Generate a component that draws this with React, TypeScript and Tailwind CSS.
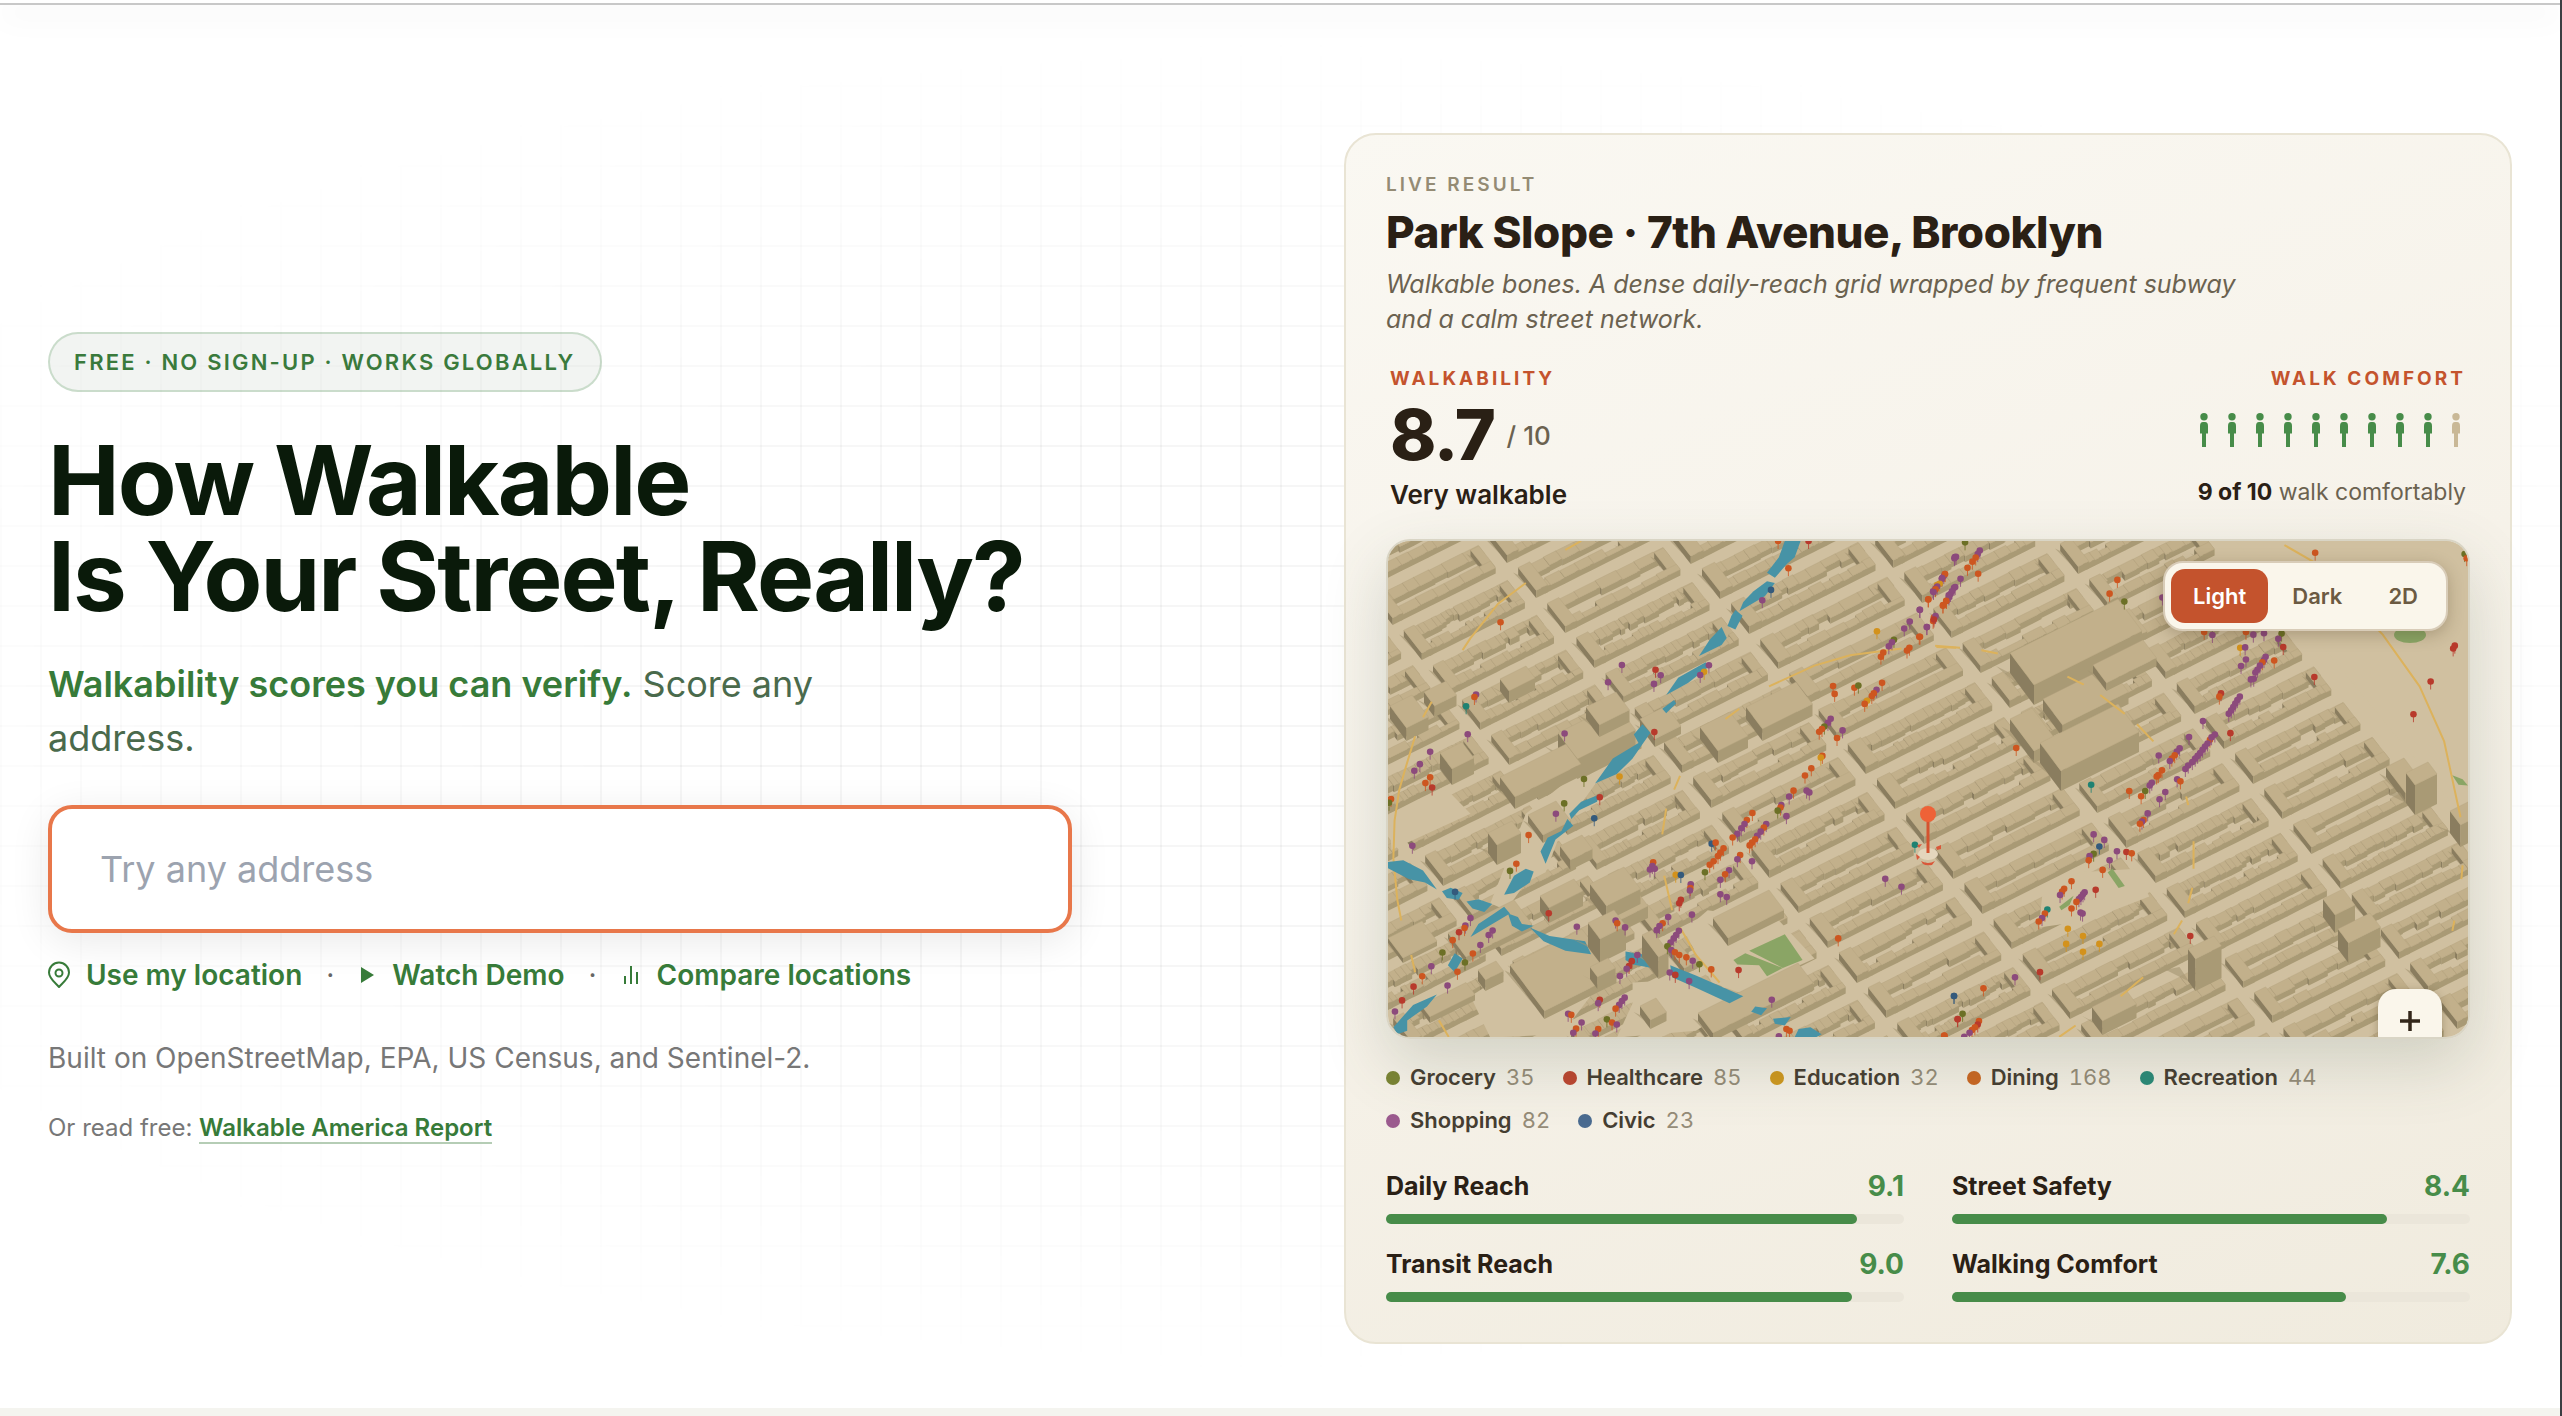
import { Fragment } from "react";

type Point = [number, number];

const categories = [
  { name: "Grocery", count: 35, dot: "bg-[#7a8434]" },
  { name: "Healthcare", count: 85, dot: "bg-[#bd4630]" },
  { name: "Education", count: 32, dot: "bg-[#cf981f]" },
  { name: "Dining", count: 168, dot: "bg-[#cb6722]" },
  { name: "Recreation", count: 44, dot: "bg-[#2b8a78]" },
  { name: "Shopping", count: 82, dot: "bg-[#9b5a8e]" },
  { name: "Civic", count: 23, dot: "bg-[#4a6b90]" },
];

const metrics = [
  { name: "Daily Reach", score: "9.1" },
  { name: "Street Safety", score: "8.4" },
  { name: "Transit Reach", score: "9.0" },
  { name: "Walking Comfort", score: "7.6" },
];

/* ---------- map geometry ---------- */

const GROUND = "#d0c0a0";
const ROOF = "#c2b08b";
const FRONT = "#a99a75";
const SIDE = "#8a7d5f";
const WATER = "#4793a6";

// the city is stored as two survey tiles, each with its own scale
const west = ([x, y]: Point): Point => [x * 0.3954 - 48, y * 0.3444 - 20];
const east = ([x, y]: Point): Point => [x * 0.4095 + 532, y * 0.3444 - 20];

function random(seed: number) {
  let s = seed;
  return () => {
    s = (s * 16807) % 2147483647;
    return s / 2147483647;
  };
}

const poly = (pts: Point[]) =>
  "M" + pts.map(([x, y]) => x.toFixed(1) + " " + y.toFixed(1)).join("L") + "Z";

// an extruded footprint: corners go back-left, back-right, front-right, front-left
function extrude(a: Point, b: Point, c: Point, d: Point, h: number) {
  const up = ([x, y]: Point): Point => [x, y - h];
  return {
    side: poly([a, d, up(d), up(a)]),
    front: poly([d, c, up(c), up(d)]),
    roof: poly([up(a), up(b), up(c), up(d)]),
    shadow: poly([a, d, [d[0] - h * 0.5, d[1] - h * 0.75], [a[0] - h * 0.7, a[1] - h * 0.35]]),
  };
}

type Solid = ReturnType<typeof extrude>;

function join(parts: Solid[]): Solid {
  return {
    side: parts.map((p) => p.side).join(""),
    front: parts.map((p) => p.front).join(""),
    roof: parts.map((p) => p.roof).join(""),
    shadow: parts.map((p) => p.shadow).join(""),
  };
}

// avenue positions at y = 100 and the y of one block corner in the column to the right of it
const avenues = [
  { x: -490, y: 250 },
  { x: -325, y: 262 },
  { x: -158, y: 240 },
  { x: 9, y: 259 },
  { x: 175, y: 267 },
  { x: 358, y: 338 },
  { x: 557, y: 272 },
  { x: 737, y: 243 },
  { x: 909, y: 0 },
];

function cityBlocks() {
  const rows: Solid[] = [];
  const pitch = 35;
  for (let col = 0; col < avenues.length - 1; col++) {
    const from = avenues[col];
    const span = (avenues[col + 1].x - from.x - 20) / 1.417;
    for (let k = -16; k < 22; k++) {
      const by = from.y + k * pitch;
      const bx = from.x + (by - 100) / 1.2 + 9;
      if (by < -10 || by - span / 2 > 530 || bx > 1090 || bx + span < -10) continue;
      const rnd = random((col + 3) * 7919 + (k + 40) * 104729);
      // t runs along the street, s from the back of the block to its front
      const at = (t: number, s: number): Point => [
        bx + t * span - (1 - s) * 18,
        by - t * span * 0.5 - (1 - s) * 23,
      ];
      const slots = 6 + Math.floor(rnd() * 10);
      const rough = rnd() < 0.5 ? 0.17 : 0.08;
      const build = (s0: number, s1: number, inner: "front" | "back") => {
        const parts: Solid[] = [];
        let t = 1;
        while (t > 0.1) {
          const w = (0.5 + rnd() * 0.9) / slots;
          const t0 = Math.max(0.08, t - w);
          const cut = rnd() < 0.5 ? 0 : rnd() * rough;
          const a0 = inner === "back" ? s0 + cut : s0;
          const b0 = inner === "front" ? s1 - cut : s1;
          parts.push(extrude(at(t0, a0), at(t, a0), at(t, b0), at(t0, b0), 5.5 + rnd()));
          t = t0;
        }
        return join(parts);
      };
      rows.push(build(0.03, 0.4, "front"));
      rows.push(extrude(at(0.92, 0.06), at(1, 0.06), at(1, 0.96), at(0.92, 0.96), 6));
      rows.push(build(0.68, 1, "back"));
      rows.push(extrude(at(0, 0), at(0.1, 0), at(0.1, 1), at(0, 1), 6.5 + rnd() * 1.5));
    }
  }
  return rows;
}

// open lots cleared out of the street grid
const lots: Point[][] = [
  [[125, 850], [270, 780], [330, 850], [130, 955]].map((p) => west(p as Point)),
  [[870, 1190], [930, 1130], [1110, 1160], [1200, 1270], [1010, 1370], [940, 1340]].map((p) => west(p as Point)),
  [[740, 1340], [900, 1330], [1010, 1400], [900, 1480], [700, 1500], [740, 1400]].map((p) => west(p as Point)),
  [[300, 1070], [390, 1020], [530, 1010], [560, 1090], [410, 1160], [290, 1180]].map((p) => east(p as Point)),
  [[330, 1380], [440, 1300], [560, 1240], [640, 1370], [560, 1490], [380, 1500]].map((p) => west(p as Point)),
  [[470, 850], [590, 740], [660, 740], [560, 900], [520, 1020], [470, 1050], [420, 1130], [380, 1110]].map((p) => west(p as Point)),
];

// x, y of the back-left corner, street length, depth, height
const landmarks: number[][] = [
  [622, 132, 108, 32, 20],
  [622, 190, 22, 32, 12],
  [655, 170, 66, 26, 12],
  [705, 132, 50, 18, 8],
  [652, 222, 78, 28, 20],
  [170, 212, 58, 26, 20],
  [198, 178, 30, 18, 12],
  [112, 248, 66, 20, 12],
  [2, 178, 22, 22, 13],
  [36, 162, 22, 14, 11],
  [112, 150, 26, 12, 12],
  [358, 178, 50, 22, 12],
  [312, 198, 30, 24, 12],
  [252, 186, 26, 20, 8],
  [52, 228, 22, 16, 16],
  [100, 312, 24, 12, 20],
  [140, 282, 28, 20, 8],
  [172, 315, 22, 14, 10],
  [220, 375, 28, 16, 12],
  [152, 370, 34, 12, 15],
  [202, 358, 34, 22, 15],
  [325, 385, 56, 20, 8],
  [60, 398, 66, 24, 6],
  [122, 432, 72, 46, 8],
  [90, 440, 18, 10, 11],
  [0, 402, 34, 20, 5],
  [33, 470, 45, 12, 6],
  [252, 474, 16, 14, 9],
  [310, 480, 100, 20, 8],
  [998, 236, 18, 26, 10],
  [1018, 262, 22, 12, 30],
  [1062, 292, 18, 14, 22],
  [935, 376, 20, 16, 18],
  [950, 408, 32, 14, 20],
  [800, 440, 26, 10, 32],
  [704, 480, 34, 14, 14],
];

// these stand in front of the canal
const towers: number[][] = [
  [200, 406, 26, 16, 24],
  [254, 416, 10, 22, 22],
  [202, 438, 18, 10, 12],
];

const toSolids = (list: number[][]) =>
  list.map(([x, y, len, depth, h]) =>
    extrude(
      [x, y],
      [x + len, y - len / 2],
      [x + len + depth * 0.75, y - len / 2 + depth],
      [x + depth * 0.75, y + depth],
      h
    )
  );

const blocks = cityBlocks();

const water: Point[][] = [
  [[1125, 58], [1165, 58], [1150, 105], [1130, 125], [1100, 165], [1080, 150], [1110, 105]],
  [[1080, 175], [1100, 180], [1075, 218], [1010, 262], [1020, 235], [1045, 205]],
  [[1000, 258], [1018, 275], [1000, 315], [980, 305], [990, 275]],
  [[965, 308], [978, 340], [965, 360], [908, 392], [935, 345]],
  [[925, 410], [930, 425], [880, 470], [825, 505], [855, 455]],
  [[815, 545], [845, 520], [850, 530], [825, 558]],
  [[765, 590], [785, 615], [740, 690], [700, 735], [645, 762], [690, 690], [755, 645], [743, 620]],
  [[655, 795], [650, 815], [605, 840], [585, 865], [580, 850], [610, 815]],
  [[575, 865], [590, 885], [545, 925], [520, 995], [507, 960], [525, 920], [560, 900]],
  [[490, 1018], [480, 1050], [440, 1080], [415, 1085], [440, 1030], [470, 1010]],
  [[121, 990], [160, 985], [210, 1015], [245, 1070], [215, 1050], [175, 1040], [121, 1008]],
  [[258, 1075], [280, 1065], [310, 1080], [300, 1100], [270, 1095]],
  [[320, 1105], [350, 1098], [385, 1112], [365, 1135], [335, 1125]],
  [[415, 1120], [430, 1140], [400, 1160], [330, 1208], [350, 1170], [390, 1140]],
  [[425, 1140], [450, 1150], [460, 1170], [490, 1175], [460, 1192], [435, 1175]],
  [[480, 1180], [530, 1205], [620, 1220], [635, 1258], [570, 1248], [515, 1220]],
  [[722, 1250], [775, 1260], [800, 1300], [740, 1288], [722, 1275]],
  [[835, 1290], [900, 1320], [1020, 1380], [985, 1400], [900, 1355], [840, 1325]],
  [[290, 1255], [310, 1270], [290, 1310], [273, 1290]],
  [[245, 1375], [220, 1410], [170, 1450], [170, 1480], [145, 1490], [135, 1470], [185, 1405]],
  [[1050, 1410], [1080, 1415], [1065, 1435], [1040, 1425]],
  [[1095, 1445], [1140, 1440], [1125, 1465], [1100, 1460]],
  [[1160, 1475], [1190, 1470], [1218, 1490], [1205, 1498], [1150, 1498]],
];

const westRoads = [
  "M610 58L570 84",
  "M470 180L400 240L330 340L310 375",
  "M232 525L210 570",
  "M190 625L165 720L150 780L138 870L135 980L145 1100L155 1160",
  "M180 1260L190 1310M250 1450L275 1498",
  "M1085 480L1200 420L1290 390L1420 370",
  "M1505 362L1568 368",
  "M860 740L845 780M825 835L815 910M820 1030L840 1130M860 1180L900 1260L960 1340",
  "M975 575L1010 545",
];
const eastRoads = [
  "M40 366L88 368M150 375L190 385",
  "M360 452L400 475M440 505L500 560M530 590L570 640",
  "M650 800L655 825M668 930L668 1010M665 1065L655 1110M640 1160L620 1200",
  "M545 1325L490 1380M380 1465L340 1498",
  "M890 70L960 118L1130 330L1220 480L1280 640L1320 860",
  "M1305 1160L1300 1190M1325 1000L1322 1040",
];

const pinColors: Record<string, string> = {
  p: "#8c4a7c",
  o: "#cd5620",
  r: "#b83a2c",
  y: "#d3921c",
  g: "#6c7026",
  b: "#345a7c",
  t: "#1f8272",
};

const westPins =
  "o1108 58 r1185 58 o1134 137 b1090 200 p1068 230 p1555 105 o406 294 p713 418 r798 432 p811 448 p794 473 p678 468 p933 419 y921 438 p911 447 " +
  "p344 504 o340 511 t319 538 p323 619 p568 617 r795 613 p228 670 p202 706 p188 725 o228 744 o216 761 r233 774 o129 807 g124 818 g617 749 y707 742 g567 820 r657 802 p546 850 b643 863 " +
  "o477 912 p183 943 o446 995 g430 1016 b291 1077 r528 1139 p599 1178 p330 1153 p317 1175 o315 1182 r301 1194 o285 1217 p386 1189 p376 1202 p355 1231 o336 1256 g259 1253 p231 1293 g316 1282 o297 1309 o208 1322 p272 1349 r186 1352 r157 1392 p139 1424 " +
  "y1358 320 g1401 345 p1396 352 p1388 364 o1374 382 o1368 394 o1440 368 o1434 376 o1465 336 p1484 308 p1441 292 p1427 312 p1466 258 o1502 280 o1500 290 o1488 228 p1500 204 y1510 186 p1522 168 o1530 154 p1506 196 p1527 160 o1525 244 o1534 232 p1544 212 p1553 194 p1540 222 " +
  "o1247 479 o1251 502 o1301 484 g1311 478 o1371 470 p1357 490 o1350 500 o1345 508 y1333 522 o1327 531 p1241 574 p1234 586 g1225 597 o1219 604 o1212 612 p1271 608 o1257 630 o1220 682 y1216 687 o1192 718 o1176 739 o1147 783 p1136 800 p1180 783 p1187 788 p1116 825 o1114 832 g1107 841 p1129 857 " +
  "o1043 848 o1029 868 p1023 880 p1015 892 p1005 908 o993 919 p1078 880 o1072 890 p1064 902 p1055 914 o1050 924 o1042 934 o1036 942 b940 937 o950 934 o970 950 o962 963 o956 973 o945 988 o935 998 o1012 970 p1005 982 p1042 988 g923 1020 p984 1014 o974 1026 p962 1042 " +
  "o792 991 p790 1002 p784 1012 p796 1010 y849 1027 b862 1028 p887 1055 o886 1066 p885 1073 p962 1084 p978 1092 r862 1100 r858 1110 p890 1143 p830 1150 o816 1168 p808 1176 p801 1188 p697 1160 o701 1168 p721 1180 p857 1190 p850 1202 p844 1212 p836 1224 g828 1235 p838 1246 o847 1252 o858 1260 o876 1267 p892 1277 g909 1287 o939 1302 r1008 1304 " +
  "p752 1260 r738 1278 r731 1292 p725 1300 p708 1321 p834 1311 r848 1318 p883 1336 p720 1384 p713 1394 p706 1405 o697 1416 r657 1390 p653 1400 p577 1431 o585 1434 p611 1456 o597 1474 p590 1486 g675 1447 o688 1456 p700 1462 o653 1475 p646 1488 p1092 1390 o1129 1475 o1137 1480 p1110 1496 p1379 1039 p1420 1062 o1260 1212 b1553 1379 r1562 1446 o1528 1494 t1454 940";

const eastPins =
  "g110 62 p88 104 p84 108 p146 86 p141 96 o136 106 o128 118 o116 136 o142 153 p99 168 o61 154 p54 166 y48 182 p42 190 o38 198 p33 206 o20 227 p0 258 p86 192 p78 204 p70 216 o64 232 o56 246 p38 276 r34 286 p17 308 o0 336 o482 171 o463 211 g499 234 o965 92 p592 222 " +
  "o694 322 p714 331 o796 322 p814 330 p840 326 g883 327 p875 342 r887 366 y782 368 p794 367 p796 402 p784 421 o865 405 p844 394 p840 404 o836 410 p830 420 p824 432 p819 440 p815 458 p808 460 r963 453 r1306 362 r1302 370 r1247 466 r1205 561 g1330 96 o1335 108 " +
  "r735 500 o731 510 p781 510 p775 520 p770 530 p765 540 p760 550 p754 560 p691 581 r758 616 p657 627 p720 620 o708 635 p712 628 p702 646 p696 655 p690 664 p684 674 p678 682 p672 690 p665 700 p655 710 p648 720 p634 660 p627 670 o622 680 o615 690 p610 697 p583 681 " +
  "o591 724 o582 738 o578 742 p566 760 p561 768 g550 784 o540 799 o511 784 p628 750 o636 756 p599 787 p585 808 t418 766 o235 659 p556 849 o546 868 p542 873 o537 879 p424 910 p450 926 b438 945 g424 966 p414 973 o412 985 p481 959 r504 961 o517 965 p463 985 o446 1013 r429 1071 " +
  "o370 1046 o352 1068 o347 1076 p342 1086 p402 1078 p398 1084 p393 1092 p388 1098 o382 1106 o370 1125 p392 1137 p397 1140 t311 1128 o305 1140 p298 1153 o290 1163 y361 1184 y398 1205 y357 1228 y438 1228 y398 1251 r660 1205 r293 1310 p232 1325 o155 1357 b83 1379 g104 1431 r92 1447 o144 1452 r141 1462 o134 1470 o127 1478 p121 1486 o60 1495 p108 1498";

function readPins(source: string, project: (p: Point) => Point) {
  const tokens = source.split(" ");
  const pins: { color: string; at: Point }[] = [];
  for (let i = 0; i < tokens.length; i += 2) {
    const x = Number(tokens[i].slice(1));
    pins.push({ color: pinColors[tokens[i][0]], at: project([x, Number(tokens[i + 1])]) });
  }
  return pins;
}

const pins = [...readPins(westPins, west), ...readPins(eastPins, east)];

function SolidPaths({ solids }: { solids: Solid[] }) {
  return (
    <>
      {solids.map((s, i) => (
        <Fragment key={i}>
          <path d={s.shadow} fill="#a39472" fillOpacity="0.6" />
          <path d={s.side} fill={SIDE} />
          <path d={s.front} fill={FRONT} />
          <path d={s.roof} fill={ROOF} stroke="#b3a27d" strokeWidth="0.4" />
        </Fragment>
      ))}
    </>
  );
}

function CityMap() {
  return (
    <svg
      viewBox="0 0 1080 496"
      preserveAspectRatio="xMidYMid slice"
      className="block h-[496px] w-full"
      role="img"
      aria-label="3D map of Park Slope"
    >
      <rect width="1080" height="496" fill={GROUND} />
      <SolidPaths solids={blocks} />
      {lots.map((l, i) => (
        <path key={i} d={poly(l)} fill={GROUND} />
      ))}
      <path d="M848 0L1080 0L1080 282L1050 246Z" fill={GROUND} />
      <SolidPaths solids={toSolids(landmarks)} />
      <g fill="none" stroke="#dcb25c" strokeWidth="2">
        <g transform="translate(-48 -20) scale(.3954 .3444)">
          {westRoads.map((d) => (
            <path key={d} d={d} vectorEffect="non-scaling-stroke" />
          ))}
        </g>
        <g transform="translate(532 -20) scale(.4095 .3444)">
          {eastRoads.map((d) => (
            <path key={d} d={d} vectorEffect="non-scaling-stroke" />
          ))}
        </g>
      </g>
      {water.map((w, i) => (
        <path key={i} d={poly(w.map(west))} fill={WATER} />
      ))}
      <g fill="#8aa565">
        <path d={poly(([[1035, 1248], [1125, 1200], [1170, 1275], [1120, 1298]] as Point[]).map(west))} />
        <path d={poly(([[995, 1275], [1025, 1255], [1120, 1298], [1080, 1322], [1060, 1290], [1005, 1288]] as Point[]).map(west))} />
        <path d={poly(([[458, 1020], [470, 1010], [500, 1060], [485, 1066]] as Point[]).map(east))} />
        <path d={poly(([[340, 1120], [375, 1088], [365, 1115], [345, 1130]] as Point[]).map(east))} />
        <path d={poly(([[1300, 738], [1325, 750], [1338, 768], [1315, 766]] as Point[]).map(east))} />
        <ellipse cx="1022" cy="94" rx="16" ry="8" />
      </g>
      <SolidPaths solids={toSolids(towers)} />
      {pins.map(({ color, at: [x, y] }, i) => (
        <g key={i}>
          <path d={"M" + x + " " + y + "v8"} stroke={color} strokeOpacity="0.8" strokeWidth="1" />
          <circle cx={x} cy={y} r="3.3" fill={color} />
        </g>
      ))}
      <g>
        <ellipse cx="540" cy="313" rx="10" ry="6" fill="#e4d6bd" />
        <path d="M533 320q7 4 14 0l-3 4q-6 1-9-1zM528 313l4 3-3 3zM548 306l5-2v4l-4 1zM529 304l5-1-3 4z" fill="#d9583a" />
        <path d="M540 275v37" stroke="#d4532f" strokeWidth="3" />
        <circle cx="540" cy="273" r="8" fill="#ee6237" />
      </g>
    </svg>
  );
}

/* ---------- icons ---------- */

function PinIcon() {
  return (
    <svg viewBox="0 0 22 28" className="h-7 w-[22px]" fill="none" stroke="currentColor" strokeWidth="2" aria-hidden="true">
      <path d="M11 26C7.500 22 1 17.500 1 11.500a10 10 0 0 1 20 0C21 17.500 14.500 22 11 26z" strokeLinejoin="round" />
      <circle cx="11" cy="12" r="3.500" />
    </svg>
  );
}

function PlayIcon() {
  return (
    <svg viewBox="0 0 18 18" className="size-[18px]" fill="currentColor" aria-hidden="true">
      <path d="M3 1l13 8-13 8z" />
    </svg>
  );
}

function BarsIcon() {
  return (
    <svg viewBox="0 0 20 20" className="size-5" stroke="currentColor" strokeWidth="2" aria-hidden="true">
      <path d="M4 11v8M10 1v18M16 7v12" />
    </svg>
  );
}

function Person({ comfortable }: { comfortable: boolean }) {
  return (
    <svg viewBox="0 0 20 34" className="h-[34px] w-5" fill={comfortable ? "#478c49" : "#c9b896"} aria-hidden="true">
      <circle cx="10" cy="3.700" r="3.700" />
      <path d="M6 20v-7q0-4 3-4h2q3 0 3 4v7.500h-2v13.500H8V20.500H6z" />
    </svg>
  );
}

/* ---------- page ---------- */

function HeroCopy() {
  return (
    <div className="relative text-[#777777]">
      <p className="inline-block rounded-full border-2 border-[#2e7d32]/20 bg-[#1a4a1a]/6 px-6 py-3 text-[22px] leading-8 font-semibold tracking-[0.1em] text-[#3a7a3c]">
        FREE · NO SIGN-UP · WORKS GLOBALLY
      </p>
      <h1 className="mt-10 text-[96px] leading-[96px] font-bold tracking-[-0.02em] text-[#0a1a0a]">
        How Walkable
        <br />
        Is Your Street, Really?
      </h1>
      <p className="mt-[33px] max-w-[840px] text-[36px] leading-[54px] text-[#4a6a4c]">
        <strong className="font-semibold text-[#377b39]">Walkability scores you can verify.</strong> Score any address.
      </p>
      <input
        type="text"
        aria-label="Address"
        placeholder="Try any address"
        className="mt-10 block h-32 w-full max-w-[1024px] rounded-3xl border-4 border-[#e8774a] bg-white px-12 text-[36px] text-[#0a1a0a] shadow-[0_8px_40px_rgba(0,0,0,0.09)] outline-none placeholder:text-[#9ca3af]"
      />
      <div className="mt-[22px] flex items-center text-[28px] leading-10 font-semibold text-[#377b39]">
        <button type="button" className="flex items-center gap-4">
          <PinIcon />
          Use my location
        </button>
        <span className="w-14 text-center font-normal text-[#666666]">·</span>
        <button type="button" className="flex items-center gap-4">
          <PlayIcon />
          Watch Demo
        </button>
        <span className="w-14 text-center font-normal text-[#666666]">·</span>
        <a href="#compare" className="flex items-center gap-4">
          <BarsIcon />
          Compare locations
        </a>
      </div>
      <p className="mt-[43px] text-[28px] leading-10">Built on OpenStreetMap, EPA, US Census, and Sentinel-2.</p>
      <p className="mt-8 text-[24px] leading-9">
        Or read free:{" "}
        <a href="#report" className="border-b-2 border-[#b5cdb5] font-semibold text-[#377b39]">
          Walkable America Report
        </a>
      </p>
    </div>
  );
}

function LiveResult() {
  return (
    <article className="relative rounded-[32px] border-2 border-[#e9e4d4] bg-linear-160 from-[#faf8f2] via-[#f6f2e9] to-[#f0ebde] p-10 text-[#2a2015]">
      <p className="text-[19px] leading-5 font-semibold tracking-[0.16em] text-[#948b74]">LIVE RESULT</p>
      <h2 className="mt-3 text-[44px] leading-[50px] font-extrabold tracking-[-0.01em]">Park Slope · 7th Avenue, Brooklyn</h2>
      <p className="mt-2.5 max-w-[900px] text-[25px] leading-[35px] text-[#6b6250] italic">
        Walkable bones. A dense daily-reach grid wrapped by frequent subway and a calm street network.
      </p>
      <div className="mt-8 flex justify-between px-1">
        <div>
          <p className="text-[19px] leading-5 font-bold tracking-[0.16em] text-[#c4532d]">WALKABILITY</p>
          <p className="mt-2.5 flex items-center gap-3">
            <span className="text-[70px] leading-[72px] font-extrabold tracking-[-0.02em]">8.7</span>
            <span className="text-[26px] font-medium text-[#6b6250]">/ 10</span>
          </p>
          <p className="mt-2 text-[26px] leading-8 font-semibold">Very walkable</p>
        </div>
        <div className="flex flex-col items-end">
          <p className="text-[19px] leading-5 font-bold tracking-[0.16em] text-[#c4532d]">WALK COMFORT</p>
          <div className="mt-6 flex gap-2">
            {Array.from({ length: 10 }, (_, i) => (
              <Person key={i} comfortable={i < 9} />
            ))}
          </div>
          <p className="mt-[29px] text-[23px] leading-8 text-[#6b6250]">
            <strong className="font-bold text-[#2a2015]">9 of 10</strong> walk comfortably
          </p>
        </div>
      </div>
      <div className="relative mt-7 overflow-hidden rounded-3xl border-2 border-[#d9d5c5] shadow-[0_24px_64px_rgba(70,85,60,0.2)]">
        <CityMap />
        <div className="absolute top-5 right-5 flex gap-0.5 rounded-[20px] border-2 border-[#d8ccb8] bg-[#faf6eb] p-1.5 text-[22px] leading-[54px] font-semibold text-[#6b5a42] shadow-[0_4px_16px_rgba(60,45,20,0.25)]">
          <button type="button" className="rounded-[14px] bg-[#c4532d] px-[22px] text-white">Light</button>
          <button type="button" className="px-[22px]">Dark</button>
          <button type="button" className="px-[22px]">2D</button>
        </div>
        <button
          type="button"
          aria-label="Zoom in"
          className="absolute right-[26px] -bottom-4 flex size-16 items-center justify-center rounded-[18px] bg-[#faf6eb] shadow-[0_2px_8px_rgba(60,45,20,0.3)]"
        >
          <svg viewBox="0 0 20 20" className="size-5" stroke="#33271a" strokeWidth="3.500" aria-hidden="true">
            <path d="M10 0v20M0 10h20" />
          </svg>
        </button>
      </div>
      <ul className="mt-[23px] flex max-w-[1000px] flex-wrap gap-x-7 gap-y-3 text-[22px] leading-[31px] font-semibold text-[#463e32]">
        {categories.map((c) => (
          <li key={c.name} className="flex items-center gap-2.5">
            <span className={"size-3.5 rounded-full " + c.dot} />
            {c.name}
            <span className="font-normal text-[#958c78] tabular-nums">{c.count}</span>
          </li>
        ))}
      </ul>
      <div className="mt-[34px] grid grid-cols-2 gap-x-12 gap-y-6">
        {metrics.map((m) => (
          <div key={m.name}>
            <div className="flex justify-between text-[25px] leading-8 font-bold">
              <span>{m.name}</span>
              <span className="text-[28px] text-[#478c49]">{m.score}</span>
            </div>
            <div className="mt-3 h-2.5 rounded-full bg-[#ebe6da]">
              <div className="h-full rounded-full bg-[#478c49]" style={{ width: Number(m.score) * 10 + "%" }} />
            </div>
          </div>
        ))}
      </div>
    </article>
  );
}

export default function App() {
  return (
    <div className="flex min-h-screen flex-col overflow-hidden border-r-2 border-[#3b3e42] bg-white font-[Inter,sans-serif]">
      <header className="relative z-10 h-[5px] border-b-2 border-[#c8c8c8] bg-white shadow-[0_10px_30px_rgba(0,0,0,0.1)]" />
      <main className="relative grid grid-cols-2 items-center gap-32 px-12 pt-32 pb-16">
        <div className="absolute inset-0 bg-[linear-gradient(to_right,rgba(0,0,0,0.035)_2px,transparent_2px),linear-gradient(to_bottom,rgba(0,0,0,0.035)_2px,transparent_2px)] mask-[radial-gradient(ellipse_64%_48%_at_center,black_40%,transparent_100%)] bg-size-[40px_40px]" />
        <HeroCopy />
        <LiveResult />
      </main>
      <footer className="min-h-2 flex-1 bg-[#f4f4ef]" />
    </div>
  );
}
